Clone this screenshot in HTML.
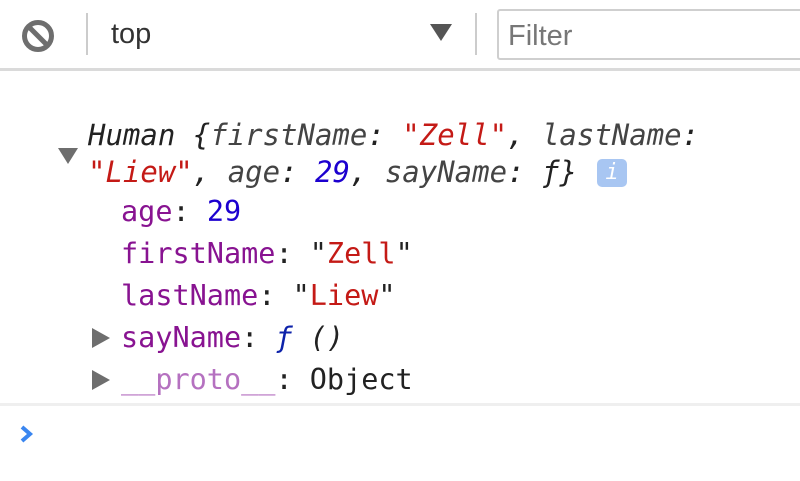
<!DOCTYPE html>
<html><head><style>
body{margin:0;width:800px;height:481px;background:#fff;overflow:hidden;position:relative;font-family:"DejaVu Sans Mono",monospace;}
.tb{position:absolute;left:0;top:0;width:800px;height:68px;border-bottom:3px solid #dadada;background:#fff}
.p{color:#881391}.s{color:#c41a16}.n{color:#1c00cf}.g{color:#444}
.row{position:absolute;white-space:pre;font-size:28.5px;line-height:42px;color:#222}
.tri{position:absolute;width:0;height:0}
</style></head><body>
<div class="tb">
<svg style="position:absolute;left:20px;top:18px" width="36" height="36" viewBox="0 0 36 36"><circle cx="18" cy="18" r="13.5" fill="none" stroke="#6e6e6e" stroke-width="5"/><line x1="9" y1="9" x2="27" y2="27" stroke="#6e6e6e" stroke-width="5"/></svg>
<div style="position:absolute;left:86px;top:13px;width:2px;height:42px;background:#ccc"></div>
<div style="position:absolute;left:111px;top:18px;font-family:'Liberation Sans',sans-serif;font-size:29px;color:#333">top</div>
<div class="tri" style="left:430px;top:24px;border-left:11px solid transparent;border-right:11px solid transparent;border-top:17px solid #555"></div>
<div style="position:absolute;left:475px;top:13px;width:2px;height:42px;background:#ccc"></div>
<div style="position:absolute;left:497px;top:9px;width:320px;height:47px;border:2px solid #cfcfcf;border-radius:3px"></div>
<div style="position:absolute;left:508px;top:20px;font-family:'Liberation Sans',sans-serif;font-size:29px;color:#777">Filter</div>
</div>
<div class="tri" style="left:58px;top:148px;border-left:10px solid transparent;border-right:10px solid transparent;border-top:16px solid #6e6e6e"></div>
<div class="row" style="left:88px;top:117px;font-style:italic;line-height:37px;font-size:29px">Human {<span class="g">firstName</span>: <span class="s">"Zell"</span>, <span class="g">lastName</span>:
<span class="s">"Liew"</span>, <span class="g">age</span>: <span class="n">29</span>, <span class="g">sayName</span>: ƒ}</div>
<div style="position:absolute;left:597px;top:159px;width:30px;height:28px;background:#a8c6f2;border-radius:5px;color:#fff;font-size:22px;text-align:center;line-height:28px;font-style:italic">i</div>
<div class="row" style="left:121px;top:191px"><span class="p">age</span>: <span class="n">29</span></div>
<div class="row" style="left:121px;top:233px"><span class="p">firstName</span>: "<span class="s">Zell</span>"</div>
<div class="row" style="left:121px;top:275px"><span class="p">lastName</span>: "<span class="s">Liew</span>"</div>
<div class="tri" style="left:92px;top:328px;border-top:10px solid transparent;border-bottom:10px solid transparent;border-left:18px solid #6e6e6e"></div>
<div class="row" style="left:121px;top:317px"><span class="p">sayName</span>: <i><span style="color:#0d22aa">ƒ</span> ()</i></div>
<div class="tri" style="left:92px;top:370px;border-top:10px solid transparent;border-bottom:10px solid transparent;border-left:18px solid #6e6e6e"></div>
<div class="row" style="left:121px;top:359px"><span style="color:#b571c0">__proto__</span>: Object</div>
<div style="position:absolute;left:0;top:403px;width:800px;height:3px;background:#efefef"></div>
<svg style="position:absolute;left:18px;top:424px" width="18" height="20" viewBox="0 0 18 20"><path d="M4 3 L12 10 L4 17" fill="none" stroke="#3a86f0" stroke-width="4"/></svg>
</body></html>
